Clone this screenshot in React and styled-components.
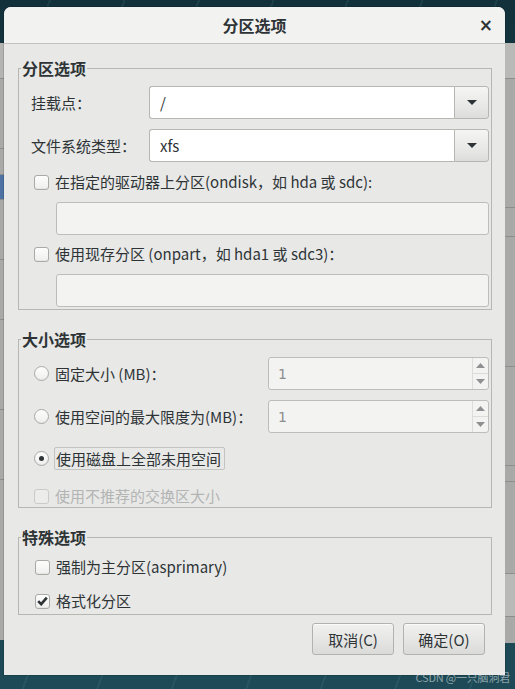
import React from 'react';
import styled, { createGlobalStyle, css } from 'styled-components';

const palette = {
  text: '#2e3436',
  muted: '#8b8e8f',
  faint: '#b3b5b4',
  body: '#e8e8e7',
  title: '#f2f2f1',
  border: '#b6b6b3',
  field: '#ffffff',
  fieldOff: '#f3f3f2',
};

const GlobalStyle = createGlobalStyle`
  html, body {
    margin: 0;
    padding: 0;
  }
  body {
    font-family: "Noto Sans CJK SC", "Noto Sans", sans-serif;
    color: ${palette.text};
    background: #173c47;
  }
  * {
    box-sizing: border-box;
  }
`;

const Desktop = styled.div`
  position: relative;
  width: 515px;
  height: 689px;
  overflow: hidden;
  display: flex;
  align-items: flex-start;
  padding-top: 7px;
  background:
    repeating-linear-gradient(
      110deg,
      rgba(255, 255, 255, 0) 0 46px,
      rgba(120, 180, 195, 0.1) 46px 48px,
      rgba(255, 255, 255, 0) 48px 70px
    ),
    linear-gradient(180deg, #12313b 0%, #1a4450 60%, #1d4a56 100%);
`;

const SideWindow = styled.div`
  flex: none;
  width: ${(p) => p.$width}px;
  height: ${(p) => p.$height}px;
  margin-top: 36px;
  background: #a9a9a8;
  display: flex;
  flex-direction: column;
`;

const SideRow = styled.div`
  flex: none;
  height: ${(p) => p.$h}px;
  background: ${(p) => p.$bg || 'transparent'};
  border-bottom: 1px solid #8e8e8d;
`;

const Dialog = styled.div`
  flex: none;
  width: 501px;
  height: 668px;
  background: ${palette.body};
  border-radius: 7px 7px 0 0;
  display: flex;
  flex-direction: column;
  box-shadow: 0 0 0 1px rgba(0, 0, 0, 0.12);
`;

const TitleBar = styled.div`
  flex: none;
  height: 37px;
  display: flex;
  align-items: center;
  justify-content: center;
  position: relative;
  background: ${palette.title};
  border-radius: 7px 7px 0 0;
  border-bottom: 1px solid #c2c2bf;
  font-size: 16px;
  font-weight: bold;
  padding-bottom: 1px;
`;

const CloseButton = styled.span`
  position: absolute;
  right: 12px;
  top: 8px;
  font-family: "DejaVu Sans", sans-serif;
  font-size: 17px;
  font-weight: bold;
  line-height: 20px;
`;

const Body = styled.div`
  flex: 1;
  display: flex;
  flex-direction: column;
  padding: 14px 13px 0 14px;
`;

const Frame = styled.fieldset`
  margin: ${(p) => (p.$first ? 0 : 19)}px 0 0;
  padding: 0 2px ${(p) => p.$bottom}px 2px;
  border: 1px solid ${palette.border};
  min-width: 0;
`;

const Legend = styled.legend`
  padding: 0 1px;
  margin: 0;
  font-size: 16px;
  font-weight: bold;
  line-height: 20px;
  height: 20px;
`;

const FrameContent = styled.div`
  display: flex;
  flex-direction: column;
  padding: ${(p) => p.$top}px 0 0 10px;
`;

const Row = styled.div`
  display: flex;
  align-items: center;
  margin-top: ${(p) => p.$gap || 0}px;
  height: ${(p) => p.$h || 20}px;
  font-size: 15px;
  line-height: 20px;
  padding-left: ${(p) => p.$indent || 0}px;
  color: ${(p) => (p.$disabled ? palette.faint : palette.text)};
`;

const FieldLabel = styled.span`
  flex: none;
  width: 118px;
  font-size: 15px;
`;

const Combo = styled.div`
  flex: 1;
  height: 33px;
  display: flex;
`;

const ComboEntry = styled.div`
  flex: 1;
  display: flex;
  align-items: center;
  padding-left: 10px;
  background: ${palette.field};
  border: 1px solid ${palette.border};
  border-right: none;
  border-radius: 3px 0 0 3px;
  font-size: 15px;
`;

const ComboButton = styled.div`
  flex: none;
  width: 35px;
  display: flex;
  align-items: center;
  justify-content: center;
  border: 1px solid ${palette.border};
  border-radius: 0 3px 3px 0;
  background: linear-gradient(180deg, #f5f5f4 0%, #e6e6e5 70%, #dcdcdb 100%);
`;

const Entry = styled.div`
  height: 33px;
  margin-top: ${(p) => p.$gap}px;
  margin-left: 25px;
  background: ${palette.fieldOff};
  border: 1px solid #bdbdba;
  border-radius: 3px;
`;

const boxBase = css`
  flex: none;
  width: 15px;
  height: 15px;
  border: 1px solid ${(p) => (p.$disabled ? '#cacac8' : '#a9a9a6')};
  background: ${(p) =>
    p.$disabled
      ? '#ececeb'
      : 'linear-gradient(180deg, #fdfdfd 0%, #efefee 100%)'};
  display: flex;
  align-items: center;
  justify-content: center;
  margin-right: 6px;
  box-shadow: ${(p) => (p.$disabled ? 'none' : 'inset 0 -1px 0 rgba(0,0,0,0.04)')};
`;

const CheckBox = styled.span`
  ${boxBase};
  border-radius: 3px;
`;

const RadioBox = styled.span`
  ${boxBase};
  border-radius: 50%;
  margin-right: ${(p) => (p.$checked ? 5 : 6)}px;
`;

const Dot = styled.span`
  width: 5px;
  height: 5px;
  border-radius: 50%;
  background: ${palette.text};
`;

const FocusLabel = styled.span`
  display: flex;
  align-items: center;
  height: 23px;
  padding: 0 3px 0 1px;
  border: 1px solid #c3c3c0;
  border-radius: 2px;
`;

const Spin = styled.div`
  flex: none;
  width: 221px;
  height: 33px;
  margin-left: auto;
  display: flex;
  background: ${palette.fieldOff};
  border: 1px solid #bdbdba;
  border-radius: 3px;
`;

const SpinValue = styled.div`
  flex: 1;
  display: flex;
  align-items: center;
  padding-left: 9px;
  font-family: "DejaVu Sans", sans-serif;
  font-size: 14px;
  color: ${palette.muted};
`;

const SpinButtons = styled.div`
  flex: none;
  width: 16px;
  display: flex;
  flex-direction: column;
  border-left: 1px solid #dcdcda;
`;

const SpinStep = styled.div`
  flex: 1;
  display: flex;
  align-items: center;
  justify-content: center;
  & + & {
    border-top: 1px solid #dcdcda;
  }
`;

const ButtonRow = styled.div`
  display: flex;
  justify-content: flex-end;
  gap: 9px;
  margin-top: 8px;
  padding-right: 7px;
`;

const Button = styled.button`
  width: 82px;
  height: 32px;
  padding: 0;
  font-family: inherit;
  font-size: 15px;
  color: ${palette.text};
  border: 1px solid #b2b2af;
  border-radius: 3px;
  background: linear-gradient(180deg, #f1f1f0 0%, #e4e4e3 60%, #dadad9 100%);
  box-shadow: inset 0 1px 0 rgba(255, 255, 255, 0.7);
`;

const Watermark = styled.span`
  position: absolute;
  right: 5px;
  bottom: 5px;
  font-size: 11px;
  line-height: 14px;
  color: rgba(235, 240, 242, 0.55);
  letter-spacing: -0.2px;
`;

const Triangle = ({ up, color = palette.text, w = 9, h = 5 }) => (
  <svg width={w} height={h} viewBox={`0 0 ${w} ${h}`}>
    <polygon
      points={up ? `0,${h} ${w},${h} ${w / 2},0` : `0,0 ${w},0 ${w / 2},${h}`}
      fill={color}
    />
  </svg>
);

const Tick = () => (
  <svg width="11" height="10" viewBox="0 0 11 10">
    <path
      d="M1.2 5.2 L4.2 8.2 L9.8 1.6"
      fill="none"
      stroke={palette.text}
      strokeWidth="2.6"
    />
  </svg>
);

const Check = ({ label, checked, disabled, indent = 3, gap }) => (
  <Row $gap={gap} $indent={indent} $disabled={disabled}>
    <CheckBox $disabled={disabled}>{checked && <Tick />}</CheckBox>
    <span>{label}</span>
  </Row>
);

const SpinBox = ({ value }) => (
  <Spin>
    <SpinValue>{value}</SpinValue>
    <SpinButtons>
      <SpinStep>
        <Triangle up color="#8e9091" w={9} h={5} />
      </SpinStep>
      <SpinStep>
        <Triangle color="#8e9091" w={9} h={5} />
      </SpinStep>
    </SpinButtons>
  </Spin>
);

const ComboField = ({ value }) => (
  <Combo>
    <ComboEntry>{value}</ComboEntry>
    <ComboButton>
      <Triangle w={10} h={5} />
    </ComboButton>
  </Combo>
);

const App = () => {
  return (
    <>
      <GlobalStyle />
      <Desktop>
        <SideWindow $width={4} $height={597}>
          <SideRow $h={36} $bg="#b4b4b3" />
          <SideRow $h={70} />
          <SideRow $h={26} />
          <SideRow $h={25} $bg="#4d72a3" />
          <SideRow $h={60} />
          <SideRow $h={60} />
          <SideRow $h={90} />
          <SideRow $h={70} />
        </SideWindow>
        <Dialog>
          <TitleBar>
            分区选项
            <CloseButton>×</CloseButton>
          </TitleBar>
          <Body>
            <Frame $first $bottom={2}>
              <Legend>分区选项</Legend>
              <FrameContent $top={8}>
                <Row $h={33}>
                  <FieldLabel>挂载点：</FieldLabel>
                  <ComboField value="/" />
                </Row>
                <Row $h={33} $gap={10}>
                  <FieldLabel>文件系统类型：</FieldLabel>
                  <ComboField value="xfs" />
                </Row>
                <Check gap={10} label="在指定的驱动器上分区(ondisk，如 hda 或 sdc):" />
                <Entry $gap={10} />
                <Check gap={9} label="使用现存分区 (onpart，如 hda1 或 sdc3)：" />
                <Entry $gap={10} />
              </FrameContent>
            </Frame>

            <Frame $bottom={1}>
              <Legend>大小选项</Legend>
              <FrameContent $top={8}>
                <Row $h={33} $indent={3}>
                  <RadioBox />
                  <span>固定大小 (MB)：</span>
                  <SpinBox value="1" />
                </Row>
                <Row $h={33} $gap={10} $indent={3}>
                  <RadioBox />
                  <span>使用空间的最大限度为(MB)：</span>
                  <SpinBox value="1" />
                </Row>
                <Row $h={23} $gap={14} $indent={3}>
                  <RadioBox $checked>
                    <Dot />
                  </RadioBox>
                  <FocusLabel>使用磁盘上全部未用空间</FocusLabel>
                </Row>
                <Check gap={16} disabled label="使用不推荐的交换区大小" />
              </FrameContent>
            </Frame>

            <Frame $bottom={3}>
              <Legend>特殊选项</Legend>
              <FrameContent $top={10}>
                <Check indent={4} label="强制为主分区(asprimary)" />
                <Check indent={4} gap={14} checked label="格式化分区" />
              </FrameContent>
            </Frame>

            <ButtonRow>
              <Button>取消(C)</Button>
              <Button>确定(O)</Button>
            </ButtonRow>
          </Body>
        </Dialog>
        <SideWindow $width={10} $height={600}>
          <SideRow $h={36} $bg="#b9b9b8" />
          <SideRow $h={129} />
          <SideRow $h={29} />
          <SideRow $h={130} />
          <SideRow $h={99} />
          <SideRow $h={16} />
          <SideRow $h={92} />
          <SideRow $h={43} $bg="#b9b9b8" />
        </SideWindow>
        <Watermark>CSDN @一只脑洞君</Watermark>
      </Desktop>
    </>
  );
};

export default App;
